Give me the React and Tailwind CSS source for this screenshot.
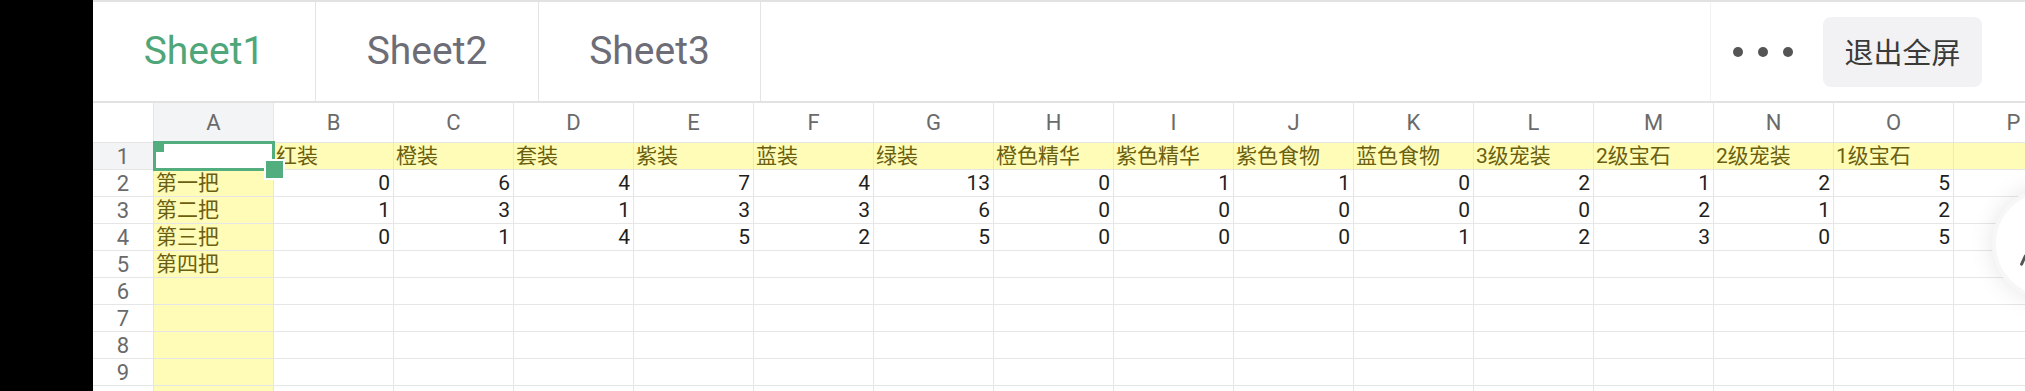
import React from "react";

const COLS = ["A", "B", "C", "D", "E", "F", "G", "H", "I", "J", "K", "L", "M", "N", "O", "P"];

const HEADERS = ["", "红装", "橙装", "套装", "紫装", "蓝装", "绿装", "橙色精华", "紫色精华", "紫色食物", "蓝色食物", "3级宠装", "2级宝石", "2级宠装", "1级宝石", ""];

const ROWS = [
  ["第一把", 0, 6, 4, 7, 4, 13, 0, 1, 1, 0, 2, 1, 2, 5],
  ["第二把", 1, 3, 1, 3, 3, 6, 0, 0, 0, 0, 0, 2, 1, 2],
  ["第三把", 0, 1, 4, 5, 2, 5, 0, 0, 0, 1, 2, 3, 0, 5],
  ["第四把"],
  [],
  [],
  [],
  [],
  [],
];

const font = "font-['Roboto','Noto_Sans_CJK_SC',sans-serif]";

function Cell({ children, yellow, right }) {
  return (
    <div
      className={
        "h-[27px] border-r border-b border-[#e6e6e6] flex items-center overflow-visible whitespace-nowrap text-[21px] leading-none " +
        (yellow ? "bg-[#fffcb8] text-[#6b5f10] " : "bg-white text-[#1f1f1f] ") +
        (right ? "justify-end pr-[3px]" : "justify-start pl-[2px]")
      }
    >
      {children}
    </div>
  );
}

export default function App() {
  return (
    <div className={"w-[2025px] h-[391px] flex bg-white overflow-hidden relative " + font}>
      {/* left black strip */}
      <div className="w-[93px] h-full bg-black shrink-0" />

      <div className="flex-1 flex flex-col min-w-0">
        {/* sheet tabs */}
        <div className="h-[103px] shrink-0 flex border-t-2 border-b-2 border-[#e2e2e2]">
          <div className="w-[223px] border-r border-[#e4e4e4] flex items-center justify-center text-[39px] text-[#4fa679]">
            Sheet1
          </div>
          <div className="w-[223px] border-r border-[#e4e4e4] flex items-center justify-center text-[39px] text-[#6d6d77]">
            Sheet2
          </div>
          <div className="w-[222px] border-r border-[#e4e4e4] flex items-center justify-center text-[39px] text-[#6d6d77]">
            Sheet3
          </div>
          <div className="ml-auto w-[315px] border-l border-[#f3f3f3] flex items-center pl-[22px] pr-[43px]">
            <div className="flex items-center gap-[15px]">
              <span className="w-[10px] h-[10px] rounded-full bg-[#555]" />
              <span className="w-[10px] h-[10px] rounded-full bg-[#555]" />
              <span className="w-[10px] h-[10px] rounded-full bg-[#555]" />
            </div>
            <button className="ml-auto w-[159px] h-[70px] rounded-lg bg-[#f2f2f4] text-[29px] text-[#3a3a3a] font-['Noto_Sans_CJK_SC',sans-serif]">
              退出全屏
            </button>
          </div>
        </div>

        {/* grid */}
        <div className="grid grid-cols-[61px_repeat(16,120px)] overflow-hidden">
          {/* column header */}
          <div className="h-[40px] border-r border-b border-[#e6e6e6] bg-white" />
          {COLS.map((c) => (
            <div
              key={c}
              className={
                "h-[40px] border-r border-b border-[#e6e6e6] flex items-center justify-center text-[22px] text-[#6a6a6a] " +
                (c === "A" ? "bg-[#f3f4f6]" : "bg-white")
              }
            >
              {c}
            </div>
          ))}

          {/* row 1 */}
          <div className="h-[27px] border-r border-b border-[#e6e6e6] bg-[#f3f4f6] flex items-center justify-center text-[22px] text-[#6a6a6a]">
            1
          </div>
          <div className="h-[27px] relative bg-white border-b border-[#e6e6e6]">
            <div className="absolute -left-[1px] -top-[2px] w-[122px] h-[30px] border-[3px] border-[#52ad7f] z-10" />
            <div className="absolute -left-[1px] -top-[2px] w-[11px] h-[11px] bg-[#52ad7f] z-10" />
            <div className="absolute left-[110px] top-[16px] w-[21px] h-[21px] bg-[#52ad7f] border-2 border-white z-20" />
          </div>
          {HEADERS.slice(1).map((h, i) => (
            <Cell key={i} yellow>
              {h}
            </Cell>
          ))}

          {/* data rows */}
          {ROWS.map((row, r) => (
            <React.Fragment key={r}>
              <div className="h-[27px] border-r border-b border-[#e6e6e6] bg-white flex items-center justify-center text-[22px] text-[#6a6a6a]">
                {r + 2}
              </div>
              <Cell yellow>{row[0]}</Cell>
              {COLS.slice(1).map((c, i) => (
                <Cell key={c} right>
                  {row[i + 1]}
                </Cell>
              ))}
            </React.Fragment>
          ))}
        </div>
      </div>

      {/* floating button, mostly off screen */}
      <div className="absolute left-[1992px] top-[188px] w-[112px] h-[112px] rounded-full bg-white shadow-[0_0_24px_rgba(0,0,0,0.10)] border-4 border-[#f7f7f7]">
        <div className="absolute left-[26px] top-[62px] w-[3px] h-[12px] bg-[#555] rotate-[25deg] rounded" />
      </div>
    </div>
  );
}
